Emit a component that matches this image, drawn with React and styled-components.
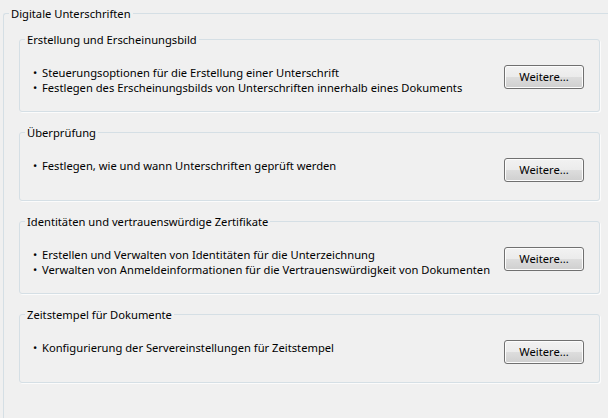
import styled, { createGlobalStyle } from "styled-components";

const GlobalStyle = createGlobalStyle`
    html, body {
        margin: 0;
        padding: 0;
        background: #f0f0f0;
        overflow: hidden;
    }
    body {
        font-family: "Noto Sans", "Open Sans", sans-serif;
        font-size: 11.2px;
        color: #000;
    }
`;

const sections = [
    {
        title: "Erstellung und Erscheinungsbild",
        items: [
            "Steuerungsoptionen für die Erstellung einer Unterschrift",
            "Festlegen des Erscheinungsbilds von Unterschriften innerhalb eines Dokuments",
        ],
    },
    {
        title: "Überprüfung",
        items: ["Festlegen, wie und wann Unterschriften geprüft werden"],
    },
    {
        title: "Identitäten und vertrauenswürdige Zertifikate",
        items: [
            "Erstellen und Verwalten von Identitäten für die Unterzeichnung",
            "Verwalten von Anmeldeinformationen für die Vertrauenswürdigkeit von Dokumenten",
        ],
    },
    {
        title: "Zeitstempel für Dokumente",
        items: ["Konfigurierung der Servereinstellungen für Zeitstempel"],
    },
];

export default function App() {
    return (
        <Page>
            <GlobalStyle />
            <OuterGroup>
                <Legend>Digitale Unterschriften</Legend>
                <GroupList>
                    {sections.map((s) => (
                        <Group key={s.title}>
                            <Legend>{s.title}</Legend>
                            <GroupRow>
                                <BulletList>
                                    {s.items.map((item) => (
                                        <Bullet key={item}>{item}</Bullet>
                                    ))}
                                </BulletList>
                                <MoreButton>Weitere...</MoreButton>
                            </GroupRow>
                        </Group>
                    ))}
                </GroupList>
            </OuterGroup>
        </Page>
    );
}

const Page = styled.div`
    width: 608px;
    height: 418px;
    padding: 6px 0 0 3px;
    box-sizing: border-box;
    display: flex;
    flex-direction: column;
`;

const OuterGroup = styled.fieldset`
    flex: 1;
    margin: 0;
    padding: 0;
    min-width: 0;
    border: 1px solid #d5dfe5;
    border-right: none;
    border-bottom: none;
    border-radius: 3px 0 0 0;
`;

const Legend = styled.legend`
    margin-left: 5px;
    padding: 0 2px;
    line-height: 15px;
    font-size: 11.2px;
`;

const GroupList = styled.div`
    display: flex;
    flex-direction: column;
    gap: 13px;
    padding: 11px 0 0 15px;
`;

const Group = styled.fieldset`
    margin: 0;
    width: 581px;
    box-sizing: border-box;
    padding: 0;
    border: 1px solid #d5dfe5;
    border-radius: 3px;
    box-shadow: 1px 1px 0 #fbfbfb;
`;

const GroupRow = styled.div`
    display: flex;
    align-items: flex-start;
    justify-content: space-between;
    padding: 18px 15px 16px 13px;
`;

const BulletList = styled.ul`
    list-style: none;
    margin: 0;
    padding: 0;
`;

const Bullet = styled.li`
    line-height: 15px;
    white-space: nowrap;
    &::before {
        content: "•";
        display: inline-block;
        width: 9px;
    }
`;

const MoreButton = styled.button`
    width: 80px;
    height: 24px;
    margin-bottom: 2px;
    flex: none;
    box-sizing: border-box;
    border: 1px solid #707070;
    border-radius: 3px;
    font-family: inherit;
    font-size: 11.2px;
    color: #000;
    padding: 0 0 1px;
    background: linear-gradient(#f2f2f2 0%, #ebebeb 50%, #dddddd 50%, #cfcfcf 100%);
    box-shadow: inset 0 0 0 1px #fcfcfc;
`;
